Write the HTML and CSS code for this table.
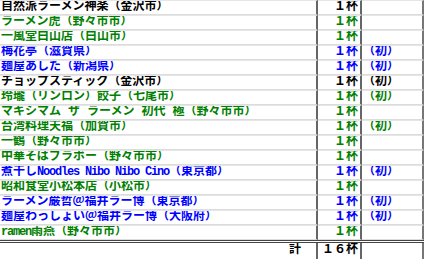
FILE: index.html
```html
<!DOCTYPE html>
<html lang="ja">
<head>
<meta charset="utf-8">
<link rel="stylesheet" href="styles.css">
</head>
<body>
<div class="tbl">
  <div class="row k"><div class="c1">自然派ラーメン神楽（金沢市）</div><div class="c2">１杯</div><div class="c3"></div></div>
  <div class="row g"><div class="c1">ラーメン虎（野々市市）</div><div class="c2">１杯</div><div class="c3"></div></div>
  <div class="row g"><div class="c1">一風堂白山店（白山市）</div><div class="c2">１杯</div><div class="c3"></div></div>
  <div class="row b"><div class="c1">梅花亭（滋賀県）</div><div class="c2">１杯</div><div class="c3">（初）</div></div>
  <div class="row b"><div class="c1">麺屋あした（新潟県）</div><div class="c2">１杯</div><div class="c3">（初）</div></div>
  <div class="row k"><div class="c1">チョップスティック（金沢市）</div><div class="c2">１杯</div><div class="c3">（初）</div></div>
  <div class="row g"><div class="c1">玲瓏（リンロン）餃子（七尾市）</div><div class="c2">１杯</div><div class="c3">（初）</div></div>
  <div class="row g"><div class="c1">マキシマム<span class="sp"> </span>ザ<span class="sp"> </span>ラーメン<span class="sp"> </span>初代<span class="sp"> </span>極（野々市市）</div><div class="c2">１杯</div><div class="c3"></div></div>
  <div class="row g"><div class="c1">台湾料理天福（加賀市）</div><div class="c2">１杯</div><div class="c3">（初）</div></div>
  <div class="row g"><div class="c1">一鶴（野々市市）</div><div class="c2">１杯</div><div class="c3"></div></div>
  <div class="row g"><div class="c1">中華そばブラボー（野々市市）</div><div class="c2">１杯</div><div class="c3"></div></div>
  <div class="row b"><div class="c1">煮干し<span class="lat">Noodles Nibo Nibo Cino</span>（東京都）</div><div class="c2">１杯</div><div class="c3">（初）</div></div>
  <div class="row g"><div class="c1">昭和食堂小松本店（小松市）</div><div class="c2">１杯</div><div class="c3"></div></div>
  <div class="row b"><div class="c1">ラーメン巌哲＠福井ラー博（東京都）</div><div class="c2">１杯</div><div class="c3">（初）</div></div>
  <div class="row b"><div class="c1">麺屋わっしょい＠福井ラー博（大阪府）</div><div class="c2">１杯</div><div class="c3">（初）</div></div>
  <div class="row g"><div class="c1"><span class="lat">ramen</span>雨燕（野々市市）</div><div class="c2">１杯</div><div class="c3"></div></div>
  <div class="row total k"><div class="c1">計</div><div class="c2">１６杯</div><div class="c3"></div></div>
</div>
</body>
</html>
```

FILE: styles.css
```css
html, body {
  margin: 0;
  padding: 0;
  background: #ffffff;
}
body {
  font-family: "Liberation Mono", "Noto Sans CJK JP", monospace;
  font-weight: bold;
  font-size: 12px;
  line-height: 13px;
}
.tbl {
  width: 424px;
  border-bottom: 1px solid #444444;
}
.row {
  display: grid;
  grid-template-columns: 318px 44px 62px;
  height: 15px;
}
.row > div {
  border-top: 1px solid #e6e6e6;
  border-bottom: 1px solid #dcdcdc;
  white-space: nowrap;
  overflow: hidden;
}
.lat {
  letter-spacing: -1.2px;
}
.sp {
  display: inline-block;
  width: 7px;
}
.c1 {
  border-right: 2px solid #666666;
  padding-left: 1px;
}
.c2 {
  border-right: 2px solid #666666;
  text-align: right;
  padding-right: 2px;
}
.c3 {
  border-right: 2px solid #777777;
  padding-left: 1px;
}
.k { color: #000000; }
.g { color: #008000; }
.b { color: #0000ff; }
.row.total {
  height: 18px;
  border-top: 3px double #444444;
}
.row.total > div {
  border-top: none;
  border-bottom: none;
  padding-top: 1px;
}
.row.total .c1 {
  text-align: right;
  padding-right: 15px;
}
```
